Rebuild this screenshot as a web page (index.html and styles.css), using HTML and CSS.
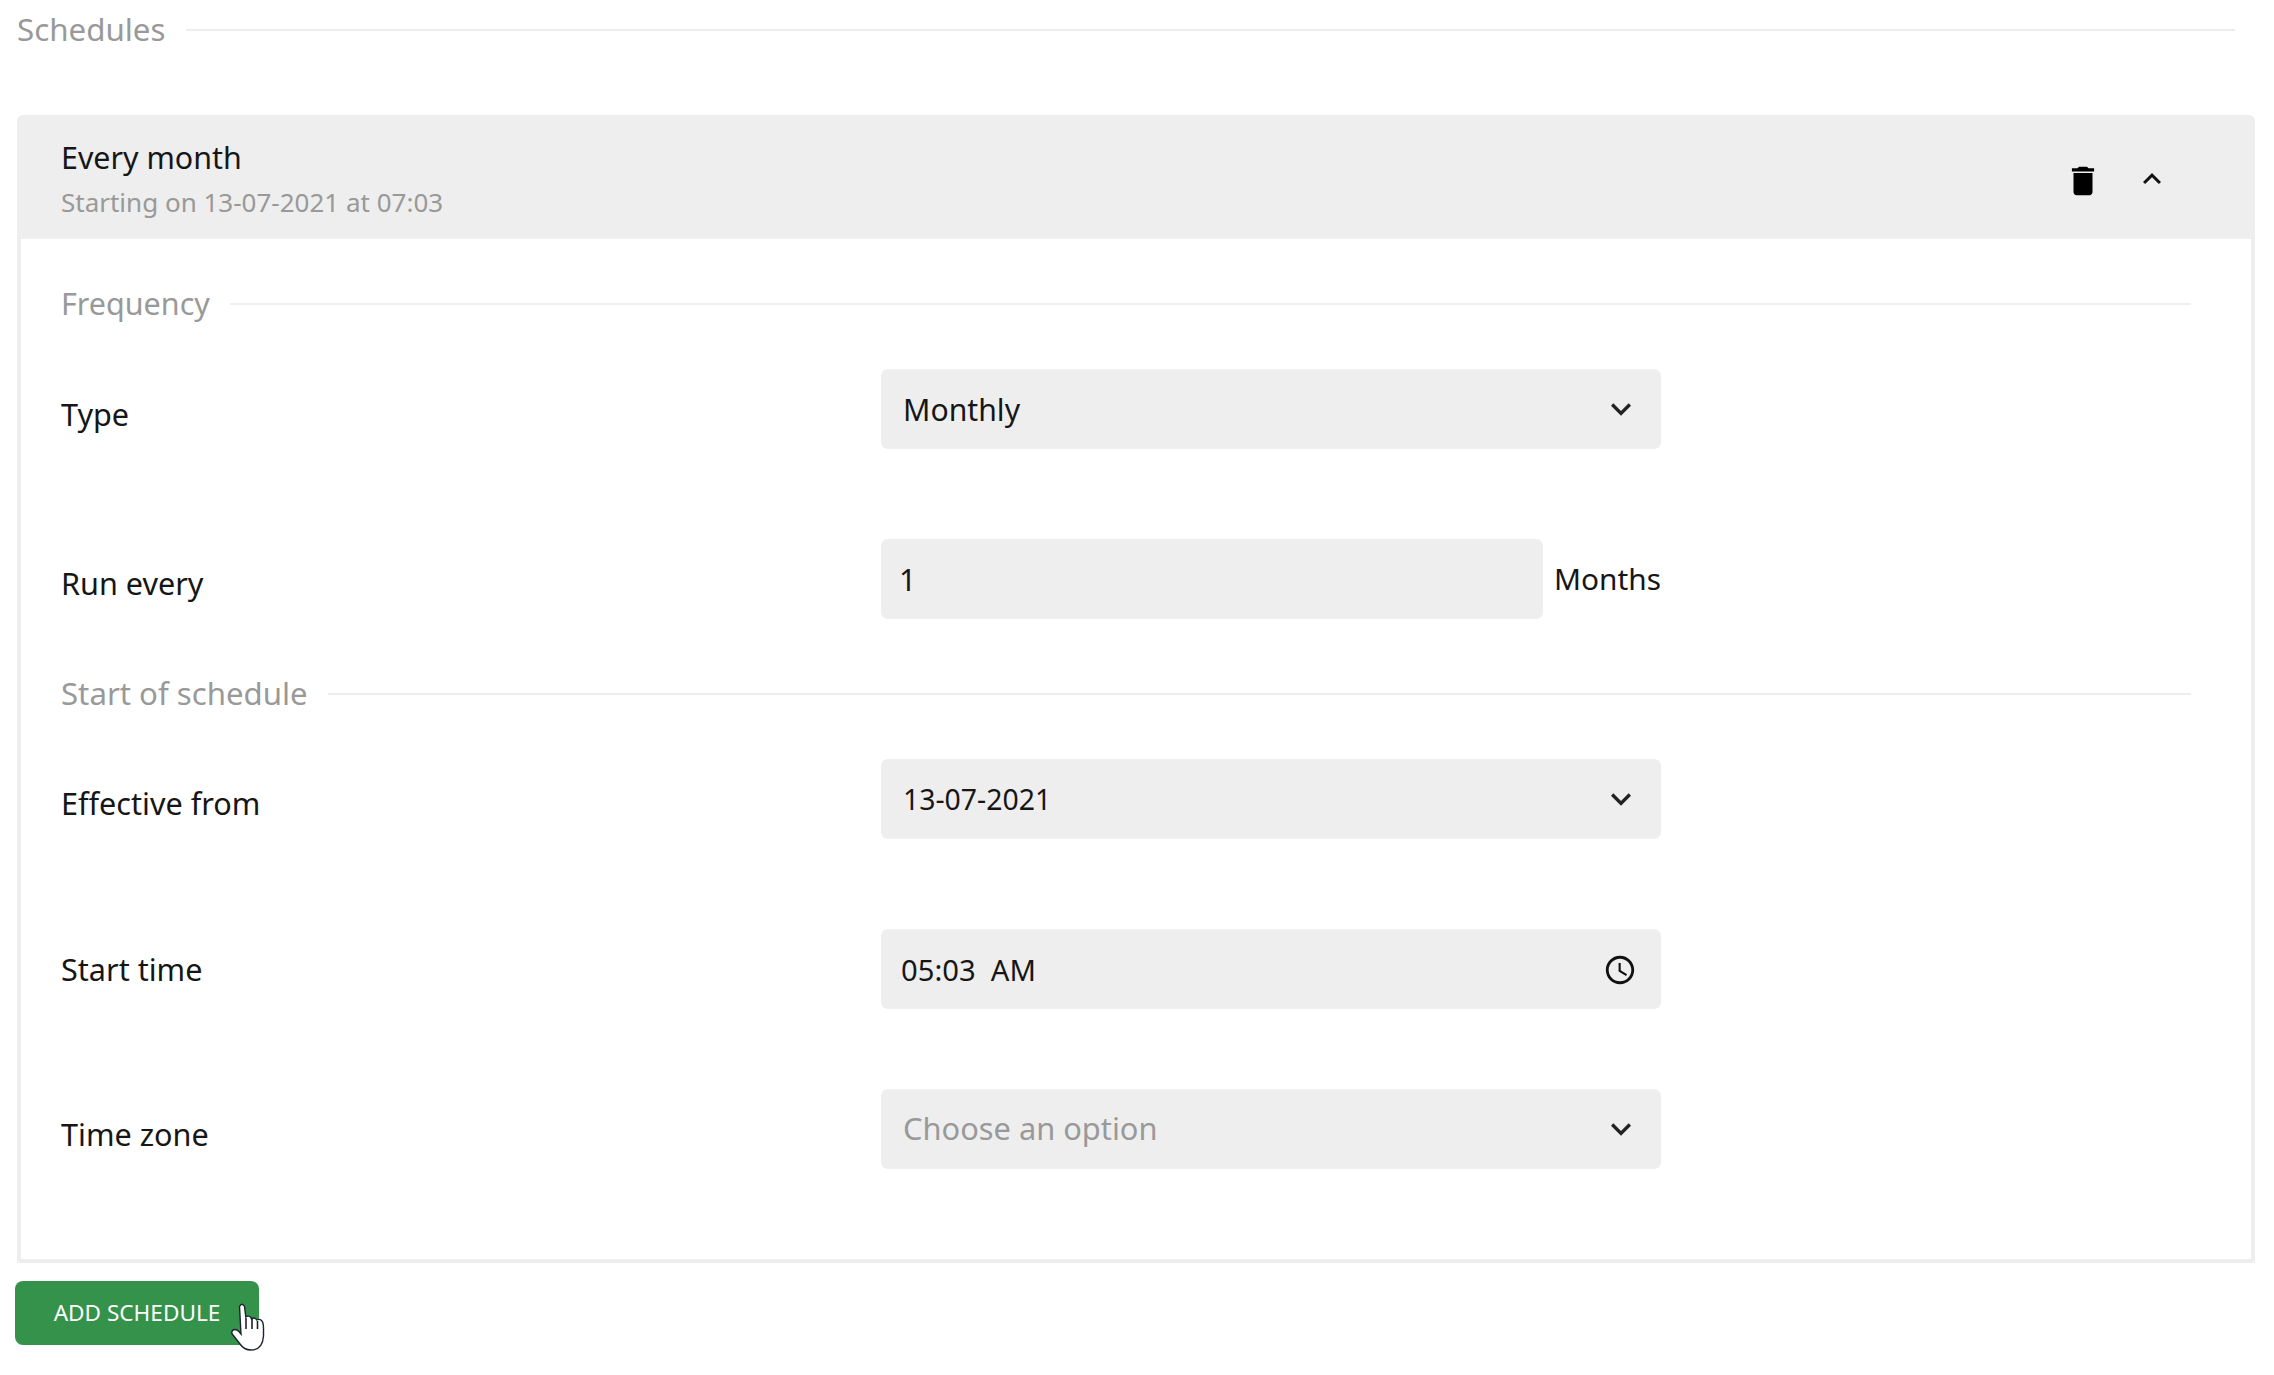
FILE: index.html
```html
<!DOCTYPE html>
<html lang="en">
<head>
<meta charset="utf-8">
<title>Schedules</title>
<link rel="stylesheet" href="styles.css">
</head>
<body>
<main class="page">
  <div class="heading heading-top"><span class="heading-text text-schedules">Schedules</span><span class="heading-line"></span></div>
  <section class="card">
    <header class="card-head">
      <div class="card-titles">
        <div class="card-title">Every month</div>
        <div class="card-sub">Starting on 13-07-2021 at 07:03</div>
      </div>
      <svg class="icon-trash" viewBox="0 0 24 24"><path d="M6 19c0 1.1.9 2 2 2h8c1.1 0 2-.9 2-2V7H6v12zM19 4h-3.5l-1-1h-5l-1 1H5v2h14V4z"/></svg>
      <svg class="icon-up" viewBox="0 0 24 24"><path d="M12 8l-6 6 1.41 1.41L12 10.83l4.59 4.58L18 14z"/></svg>
    </header>
    <div class="card-body">
      <div class="heading"><span class="heading-text text-frequency">Frequency</span><span class="heading-line"></span></div>
      <div class="row row-type">
        <label class="row-label label-low">Type</label>
        <div class="control"><span class="value value-word">Monthly</span><svg class="icon-down" viewBox="0 0 24 24"><path d="M16.59 8.59L12 13.17 7.41 8.59 6 10l6 6 6-6z"/></svg></div>
      </div>
      <div class="row row-run">
        <label class="row-label label-run">Run every</label>
        <div class="combo">
          <div class="control control-input"><span class="value value-word">1</span></div>
          <span class="unit">Months</span>
        </div>
      </div>
      <div class="heading heading-start"><span class="heading-text text-start">Start of schedule</span><span class="heading-line"></span></div>
      <div class="row row-from">
        <label class="row-label label-mid">Effective from</label>
        <div class="control"><span class="value value-date">13-07-2021</span><svg class="icon-down" viewBox="0 0 24 24"><path d="M16.59 8.59L12 13.17 7.41 8.59 6 10l6 6 6-6z"/></svg></div>
      </div>
      <div class="row row-time">
        <label class="row-label">Start time</label>
        <div class="control control-time"><span class="value value-time">05:03&nbsp; AM</span><svg class="icon-clock" viewBox="0 0 24 24"><path d="M11.99 2C6.47 2 2 6.48 2 12s4.47 10 9.99 10C17.52 22 22 17.52 22 12S17.52 2 11.99 2zM12 20c-4.42 0-8-3.58-8-8s3.58-8 8-8 8 3.58 8 8-3.58 8-8 8z"/><path d="M12.5 7H11v6l5.25 3.15.75-1.23-4.5-2.67z"/></svg></div>
      </div>
      <div class="row row-zone">
        <label class="row-label label-low">Time zone</label>
        <div class="control control-empty"><span class="value value-placeholder">Choose an option</span><svg class="icon-down" viewBox="0 0 24 24"><path d="M16.59 8.59L12 13.17 7.41 8.59 6 10l6 6 6-6z"/></svg></div>
      </div>
    </div>
  </section>
  <div class="actions">
    <button class="btn" type="button">ADD SCHEDULE</button>
    <svg class="cursor" viewBox="0 0 34 48"><path d="M8.5 3.5Q11 -1 13.5 3.5L14.8 14Q17.5 12 20 14.5L20.5 16Q23 14 25.3 16.2L25.8 17Q28.5 15.5 30.5 17.5Q32.5 19.5 32.5 25L32.5 33Q31.5 47 20 47Q13 47 9 41L1.2 31Q0 29 2 27Q5 25.5 8 28.5L10 31Z" fill="#fff" stroke="#1c2230" stroke-width="1.4"/><path d="M15 15V26M21 16V26M26.5 18V26" fill="none" stroke="#1c2230" stroke-width="1.6"/></svg>
  </div>
</main>
</body>
</html>
```
FILE: styles.css
```css
* { box-sizing: border-box; }
html, body { margin: 0; padding: 0; background: #fff; }
body {
  font-family: "Noto Sans", "Open Sans", sans-serif;
  font-size: 30px;
  color: #161616;
  width: 2274px;
  height: 1375px;
  overflow: hidden;
}
.page { padding-left: 17px; padding-right: 19px; }

.heading { display: flex; align-items: center; height: 50px; gap: 20px; }
.heading-top { height: 60px; margin-right: 20px; margin-bottom: 55px; }
.heading-text { color: #999; white-space: nowrap; padding-bottom: 3px; }
.text-schedules { font-size: 31.3px; }
.text-frequency { font-size: 30.5px; }
.text-start { font-size: 31.2px; }
.heading-line { flex: 1; height: 2px; background: #eee; }
.heading-start { margin-top: 50px; margin-bottom: 40px; }

.card { border-radius: 6px 6px 0 0; }
.card-head {
  height: 124px;
  background: #eee;
  border-radius: 6px 6px 0 0;
  padding: 0 85px 0 44px;
  display: flex;
  align-items: center;
}
.card-titles { flex: 1; }
.card-title { font-size: 30.4px; line-height: 38px; margin-top: 7px; }
.card-sub { font-size: 26px; line-height: 40px; color: #999; margin-top: 5px; }
.icon-trash { width: 38px; height: 38px; fill: #000; margin-right: 32px; margin-top: 8px; }
.icon-up { width: 36px; height: 36px; fill: #111; margin-top: 3px; }

.card-body {
  border: 4px solid #eee;
  border-top: 0;
  padding: 40px 60px 90px 40px;
}

.row { display: grid; grid-template-columns: 820px 780px; align-items: center; }
.row-type { margin-top: 40px; }
.row-run { margin-top: 90px; }
.row-time { margin-top: 90px; }
.row-zone { margin-top: 80px; }
.row-label { font-size: 30.6px; }
.label-low { padding-top: 9px; }
.label-mid { padding-top: 7px; }
.label-run { padding-top: 8px; }

.control {
  height: 80px;
  background: #eee;
  border-radius: 7px;
  display: flex;
  align-items: center;
  justify-content: space-between;
  padding: 0 20px 0 22px;
}
.control-input { width: 662px; flex: none; padding-left: 18px; }
.control-time { padding: 0 24px 0 20px; }
.value { padding-bottom: 3px; }
.value-word { font-size: 30.2px; padding-bottom: 0; }
.value-date { font-size: 28.4px; padding-bottom: 1px; }
.value-time { font-size: 29.2px; padding-bottom: 0; padding-top: 2px; }
.value-placeholder { font-size: 30.8px; color: #999; }
.combo { display: flex; align-items: center; gap: 11px; }
.unit { font-size: 29.8px; white-space: nowrap; padding-bottom: 2px; }
.icon-down { width: 40px; height: 40px; fill: #222; }
.icon-clock { width: 34px; height: 34px; fill: #111; margin-top: 2px; }

.actions { position: relative; margin-top: 18px; margin-left: -2px; }
.btn {
  width: 244px;
  height: 64px;
  background: #34924a;
  color: #fff;
  border: 0;
  border-radius: 8px;
  padding: 0 0 2px;
  font-family: inherit;
  font-size: 22.6px;
}
.cursor { position: absolute; left: 216px; top: 22px; width: 34px; height: 48px; }
```
